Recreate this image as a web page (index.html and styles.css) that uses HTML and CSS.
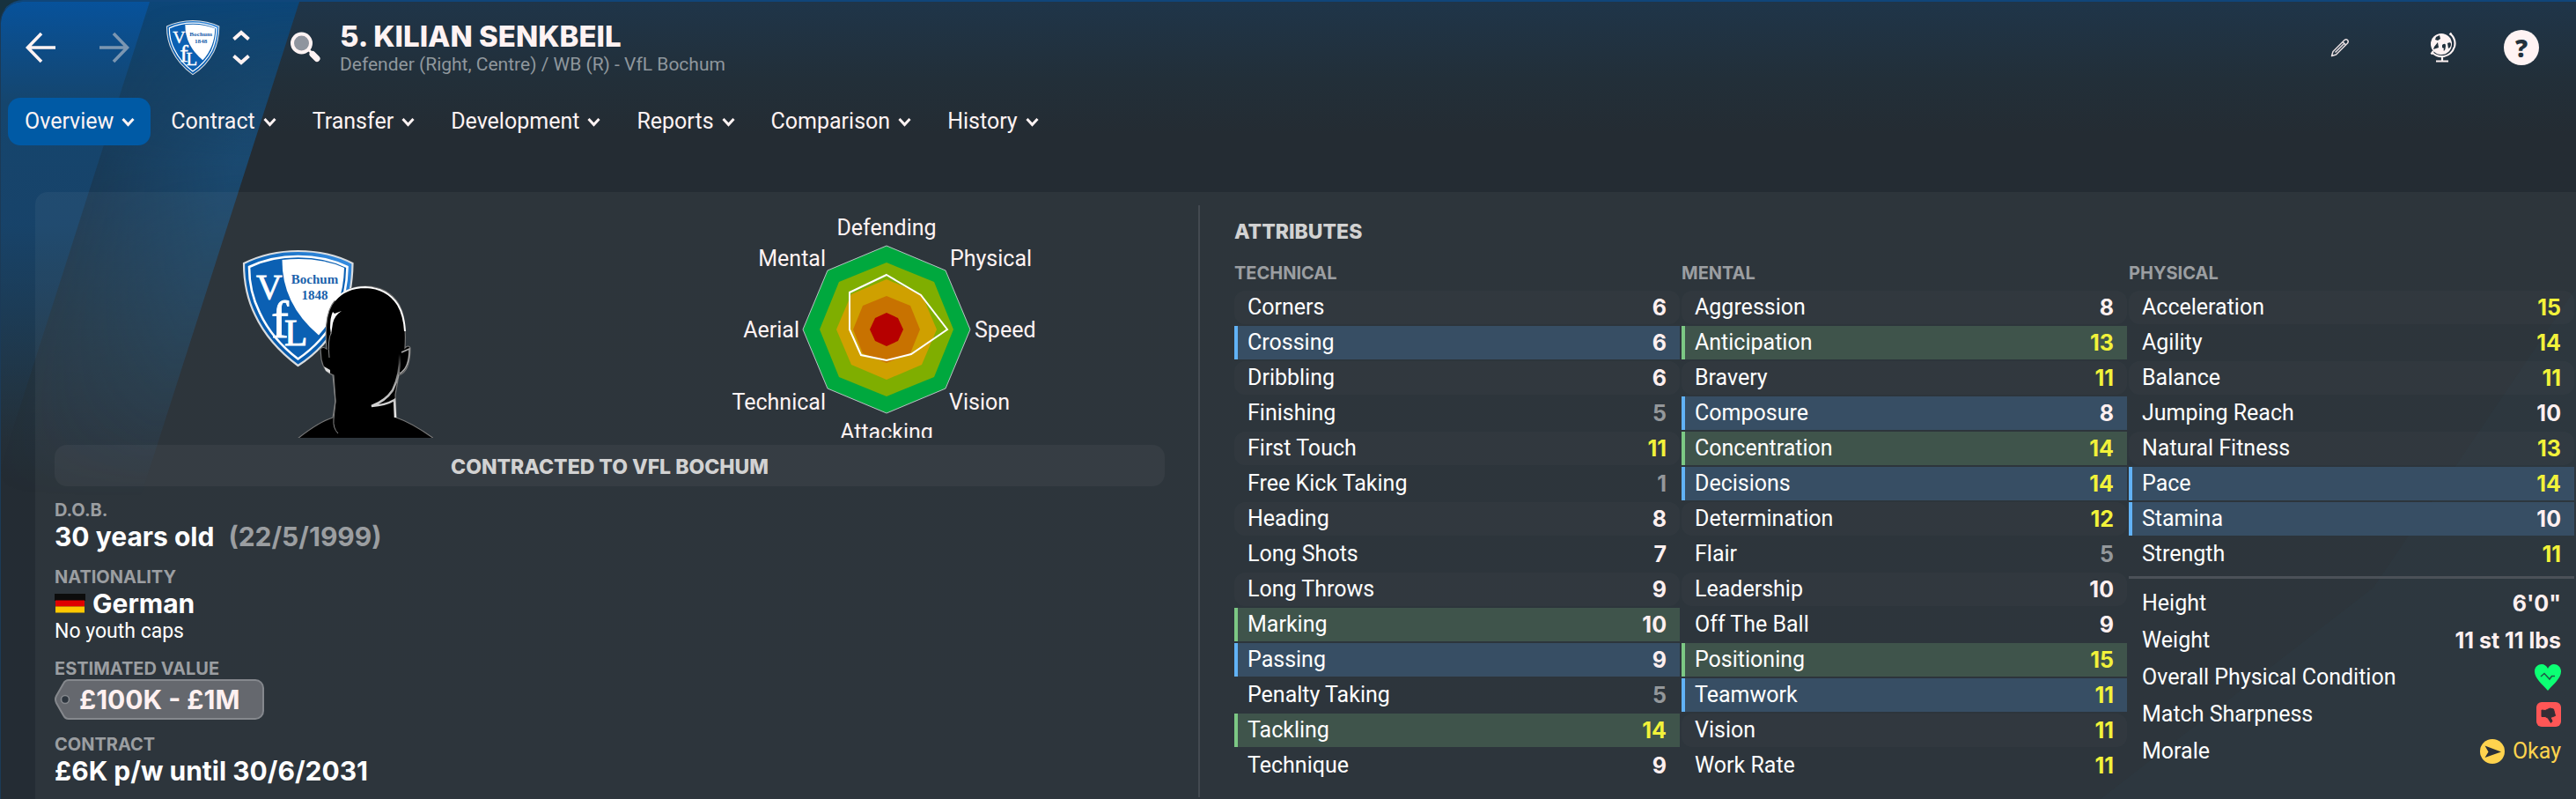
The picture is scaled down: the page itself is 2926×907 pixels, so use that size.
FILE: index.html
```
<!DOCTYPE html>
<html lang="en">
<head>
<meta charset="utf-8">
<title>Kilian Senkbeil - Overview</title>
<link rel="stylesheet" href="styles.css">
</head>
<body>
<svg class="stripes" viewBox="0 0 400 907" aria-hidden="true">
  <defs>
    <linearGradient id="fadeA" x1="0" y1="0" x2="0" y2="1"><stop offset="0" stop-color="#07529b"/><stop offset="0.22" stop-color="#15456d"/><stop offset="0.48" stop-color="#17446c" stop-opacity=".9"/><stop offset="0.95" stop-color="#1b3c56" stop-opacity="0"/></linearGradient>
    <linearGradient id="fadeB" x1="0" y1="0" x2="0" y2="1"><stop offset="0" stop-color="#0c4678"/><stop offset="0.1" stop-color="#153f62"/><stop offset="0.26" stop-color="#1a3852"/><stop offset="0.6" stop-color="#24404f" stop-opacity="0"/></linearGradient>
    <linearGradient id="edge" gradientUnits="userSpaceOnUse" x1="160" y1="0" x2="310" y2="48"><stop offset="0" stop-color="#1d5f94" stop-opacity="0"/><stop offset="1" stop-color="#1d5f94" stop-opacity=".4"/></linearGradient>
    <linearGradient id="edgeFade" x1="0" y1="0" x2="0" y2="1"><stop offset="0" stop-color="#fff" stop-opacity="0"/><stop offset="0.2" stop-color="#fff"/><stop offset="0.62" stop-color="#fff" stop-opacity="0"/></linearGradient>
    <mask id="edgeMask"><path fill="url(#edgeFade)" d="M0 0H400V907H0Z"/></mask>
  </defs>
  <path fill="url(#fadeB)" d="M0 0H339L48 907H0Z"/>
  <path fill="url(#edge)" mask="url(#edgeMask)" d="M169 0H339L48 907H0V528Z"/>
  <path fill="url(#fadeA)" d="M0 0H169L0 528Z"/>
</svg>
<svg class="corner" viewBox="0 0 560 600" aria-hidden="true"><path fill="#2c5058" opacity=".1" d="M560 20V600H20L330 360Z"/></svg>

<header class="topbar">
  <button class="icon-btn" aria-label="Back"><svg width="36" height="36" viewBox="0 0 36 36" fill="none" stroke="#fff3f3" stroke-width="3.6"><path d="M19 2L3.500 18L19 34M3.500 18H35"/></svg></button>
  <button class="icon-btn forward" aria-label="Forward"><svg width="36" height="36" viewBox="0 0 36 36" fill="none" stroke="#7b96b1" stroke-width="3.600"><path d="M17 2L32.500 18L17 34M32.500 18H1"/></svg></button>
  <svg class="club" width="62" height="64" viewBox="274 282 129 136" preserveAspectRatio="none" role="img" aria-label="VfL Bochum"><use href="#crest"/></svg>
  <div class="stepper">
    <button class="icon-btn" aria-label="Previous player"><svg width="20" height="12" viewBox="0 0 20 12" fill="none" stroke="#fff3f3" stroke-width="4"><path d="M1.500 10.500L10 3L18.500 10.500"/></svg></button>
    <button class="icon-btn" aria-label="Next player"><svg width="20" height="12" viewBox="0 0 20 12" fill="none" stroke="#fff3f3" stroke-width="4"><path d="M1.500 1.500L10 9L18.500 1.500"/></svg></button>
  </div>
  <button class="icon-btn search" aria-label="Search"><svg width="36" height="36" viewBox="0 0 36 36"><circle cx="13.500" cy="13" r="10.500" fill="#8f949e" stroke="#fff3f3" stroke-width="4"/><path d="M21 20L25 24" stroke="#fff3f3" stroke-width="3"/><path d="M26 25.500L31 30.500" stroke="#fff3f3" stroke-width="7" stroke-linecap="round"/></svg></button>
  <div class="heading">
    <h1>5. KILIAN SENKBEIL</h1>
    <p>Defender (Right, Centre) / WB (R) - VfL Bochum</p>
  </div>
  <div class="tools">
    <button class="icon-btn" aria-label="Edit"><svg width="22" height="22" viewBox="0 0 22 22" fill="none" stroke="#e8dfe1" stroke-width="1.500" stroke-linejoin="round"><path d="M1.500 20.500L3 15.500L16 2.500Q18 1 19.500 2.500Q21 4 19.500 6L6.500 19Z"/><path d="M5.500 16.500L15.500 6.500M14 4.500L17.500 8"/></svg></button>
    <button class="icon-btn globe" aria-label="World"><svg width="32" height="36" viewBox="0 0 32 36"><circle cx="14" cy="14" r="12" fill="#fff3f3"/><path fill="#22313c" d="M8 6L12 4L13 8L10 10L7 9ZM6 17L10 12L11 18L8 19L5 20ZM15 15Q19 12 19 16Q19 20 17 22Q16 21 17 19L15 18ZM21 13Q25 11 25 14Q25 18 22 19Z"/><path fill="none" stroke="#fff3f3" stroke-width="2.200" d="M23.500 3.500L25.500 1.500M25 3Q31 9 29 17Q26 26 17 28Q9 29 3.500 23.500M5 22L2.500 25.500M15 28V33M8 33.500H22"/></svg></button>
    <button class="icon-btn help" aria-label="Help">?</button>
  </div>
</header>

<nav class="tabs">
  <button class="tab active">Overview <svg class="chev" viewBox="0 0 15 11"><path d="M1.500 2L7.500 8.500L13.500 2"/></svg></button>
  <button class="tab">Contract <svg class="chev" viewBox="0 0 15 11"><path d="M1.500 2L7.500 8.500L13.500 2"/></svg></button>
  <button class="tab">Transfer <svg class="chev" viewBox="0 0 15 11"><path d="M1.500 2L7.500 8.500L13.500 2"/></svg></button>
  <button class="tab">Development <svg class="chev" viewBox="0 0 15 11"><path d="M1.500 2L7.500 8.500L13.500 2"/></svg></button>
  <button class="tab">Reports <svg class="chev" viewBox="0 0 15 11"><path d="M1.500 2L7.500 8.500L13.500 2"/></svg></button>
  <button class="tab">Comparison <svg class="chev" viewBox="0 0 15 11"><path d="M1.500 2L7.500 8.500L13.500 2"/></svg></button>
  <button class="tab">History <svg class="chev" viewBox="0 0 15 11"><path d="M1.500 2L7.500 8.500L13.500 2"/></svg></button>
</nav>

<main class="panel">
  <section class="profile">
    <div class="visuals">
      <svg class="portrait" width="230" height="218" viewBox="262 279 230 218" role="img" aria-label="Player portrait">
        <defs>
          <linearGradient id="blue" x1="1" y1="0" x2="0.3" y2="1"><stop offset="0" stop-color="#3d94e8"/><stop offset="0.5" stop-color="#0a62b5"/><stop offset="1" stop-color="#0759aa"/></linearGradient>
          <linearGradient id="rimR" x1="0" y1="0" x2="0" y2="1"><stop offset="0" stop-color="#fff" stop-opacity="0"/><stop offset="0.5" stop-color="#aaa"/><stop offset="1" stop-color="#eee"/></linearGradient>
          <g id="crest">
            <path fill="url(#blue)" stroke="#d9dcdf" stroke-width="2.200" d="M277 299Q305 285 338.500 285Q374 285 400.500 299Q400 335 388 360Q370 395 338.500 415Q305 390 290 358Q277 332 277 299Z"/>
            <path fill="#0b60b3" stroke="#fff" stroke-width="2.600" d="M283 303Q308 291 338.500 291Q370 291 394.500 303Q394 333 383 358Q367 388 338.500 407.500Q309 385 295 355Q283 331 283 303Z"/>
            <path fill="#fff" d="M320.500 295Q362 291 391 304Q390 350 362 380.500Q320 345 320.500 295Z"/>
            <g font-family="Liberation Serif, serif" font-weight="700">
              <text x="291" y="339" font-size="41" fill="#fff" font-weight="400" stroke="#fff" stroke-width=".8">V</text>
              <text x="308" y="383" font-size="60" fill="#fff" font-weight="400" stroke="#fff" stroke-width=".8">f</text>
              <text x="323" y="391.500" font-size="43" fill="#fff" font-weight="400" stroke="#fff" stroke-width="1">L</text>
              <text x="357.500" y="322" font-size="15" fill="#1b62ab" text-anchor="middle">Bochum</text>
              <text x="357.500" y="340" font-size="15" fill="#1b62ab" text-anchor="middle">1848</text>
            </g>
          </g>
        </defs>
        <use href="#crest"/>
        <path fill="#000" stroke="#777" stroke-width="1.200" d="M338 498Q362 479 378 474L381 455L379 426Q368 423 365 408L364 396Q367 393 371 396Q368 361 377 346Q390 325 415 325Q442 325 454 347Q462 362 460 395Q464 391 466 395Q466 422 453 426L449 448L450 474Q468 480 493 498Z"/>
        <path fill="none" stroke="#fff" stroke-width="2" d="M380 341Q393 326 415 326Q440 327 452 346Q459 358 460 376"/>
        <path fill="#fff" d="M375 372Q375 360 378 354L380 356L388 353Q380 358 378 367L376 380Z"/>
        <path fill="none" stroke="#888" stroke-width="1" d="M376 378Q372 386 374 406M378 426L381 456L379 476Q378 486 384 492"/>
        <path fill="none" stroke="url(#rimR)" stroke-width="2.500" d="M454 402Q455 425 446 443Q438 455 422 461Q438 460 448 454L449 474"/>
        <path fill="#ddd" d="M368 416L375 420L375 424L370 421Z"/>
        <path fill="none" stroke="#aaa" stroke-width="1.500" d="M456 400L465 396Q465 418 454 424"/>
      </svg>
      <svg class="radar" width="370" height="279" viewBox="822 218 370 279" role="img" aria-label="Ability polygon">
        <path fill="#00a83e" stroke="#b9c2c5" stroke-width="1" d="M1006 279L1073 307L1101 374L1073 441L1006 469L939 441L911 374L939 307Z"/>
        <path fill="#7fae00" d="M1006 298L1060 320L1082 374L1060 428L1006 450L952 428L930 374L952 320Z"/>
        <path fill="#cfa000" d="M1006 317L1046 334L1063 374L1046 414L1006 431L966 414L949 374L966 334Z"/>
        <path fill="#c87200" d="M1006 336L1033 347L1044 374L1033 401L1006 412L979 401L968 374L979 347Z"/>
        <path fill="#b60000" d="M1006 355L1019 361L1025 374L1019 387L1006 393L993 387L987 374L993 361Z"/>
        <path fill="none" stroke="#fff" stroke-width="2" d="M1006 312L1045 335L1075 374L1034 402L1006 409L977 403L964 374L964 332Z"/>
        <g class="radar-label">
          <text x="1006" y="267" text-anchor="middle">Defending</text>
          <text x="1078" y="302">Physical</text>
          <text x="1106" y="383">Speed</text>
          <text x="1077" y="465">Vision</text>
          <text x="1006" y="499" text-anchor="middle">Attacking</text>
          <text x="937" y="465" text-anchor="end">Technical</text>
          <text x="907" y="383" text-anchor="end">Aerial</text>
          <text x="937" y="302" text-anchor="end">Mental</text>
        </g>
      </svg>
    </div>
    <h2 class="contracted">CONTRACTED TO VFL BOCHUM</h2>
    <dl class="facts">
      <div><dt>D.O.B.</dt><dd>30 years old <span class="dim">(22/5/1999)</span></dd></div>
      <div><dt>NATIONALITY</dt><dd><svg class="flag" width="35" height="22" viewBox="0 0 35 22" role="img" aria-label="Germany"><path fill="#0c0c0c" d="M0 0H35V8H0Z"/><path fill="#e00000" d="M1 7.500H34V14.500H1Z"/><path fill="#ffc800" d="M1 14.500H34V21.500H1Z"/></svg>German</dd><dd class="small">No youth caps</dd></div>
      <div><dt>ESTIMATED VALUE</dt><dd><span class="tag"><svg class="tag-tip" viewBox="0 0 20 46" aria-hidden="true"><path fill="#65686e" d="M20 1H16Q12 1 10 5L2 19Q0 23 2 27L10 41Q12 45 16 45H20Z"/><path fill="none" stroke="#85888d" stroke-width="2" d="M20 1H16Q12 1 10 5L2 19Q0 23 2 27L10 41Q12 45 16 45H20"/><circle cx="12" cy="23" r="4.500" fill="#2d353e" stroke="#85888d" stroke-width="1.600"/></svg><span class="tag-body">£100K - £1M</span></span></dd></div>
      <div><dt>CONTRACT</dt><dd>£6K p/w until 30/6/2031</dd></div>
    </dl>
  </section>

  <section class="attributes">
    <h2>ATTRIBUTES</h2>
    <div class="columns">
      <div class="column">
        <h3>TECHNICAL</h3>
        <dl class="rows">
          <div><dt>Corners</dt><dd>6</dd></div>
          <div class="pref"><dt>Crossing</dt><dd>6</dd></div>
          <div><dt>Dribbling</dt><dd>6</dd></div>
          <div><dt>Finishing</dt><dd class="low">5</dd></div>
          <div><dt>First Touch</dt><dd class="good">11</dd></div>
          <div><dt>Free Kick Taking</dt><dd class="low">1</dd></div>
          <div><dt>Heading</dt><dd>8</dd></div>
          <div><dt>Long Shots</dt><dd>7</dd></div>
          <div><dt>Long Throws</dt><dd>9</dd></div>
          <div class="key"><dt>Marking</dt><dd>10</dd></div>
          <div class="pref"><dt>Passing</dt><dd>9</dd></div>
          <div><dt>Penalty Taking</dt><dd class="low">5</dd></div>
          <div class="key"><dt>Tackling</dt><dd class="good">14</dd></div>
          <div><dt>Technique</dt><dd>9</dd></div>
        </dl>
      </div>
      <div class="column">
        <h3>MENTAL</h3>
        <dl class="rows">
          <div><dt>Aggression</dt><dd>8</dd></div>
          <div class="key"><dt>Anticipation</dt><dd class="good">13</dd></div>
          <div><dt>Bravery</dt><dd class="good">11</dd></div>
          <div class="pref"><dt>Composure</dt><dd>8</dd></div>
          <div class="key"><dt>Concentration</dt><dd class="good">14</dd></div>
          <div class="pref"><dt>Decisions</dt><dd class="good">14</dd></div>
          <div><dt>Determination</dt><dd class="good">12</dd></div>
          <div><dt>Flair</dt><dd class="low">5</dd></div>
          <div><dt>Leadership</dt><dd>10</dd></div>
          <div><dt>Off The Ball</dt><dd>9</dd></div>
          <div class="key"><dt>Positioning</dt><dd class="good">15</dd></div>
          <div class="pref"><dt>Teamwork</dt><dd class="good">11</dd></div>
          <div><dt>Vision</dt><dd class="good">11</dd></div>
          <div><dt>Work Rate</dt><dd class="good">11</dd></div>
        </dl>
      </div>
      <div class="column">
        <h3>PHYSICAL</h3>
        <dl class="rows">
          <div><dt>Acceleration</dt><dd class="good">15</dd></div>
          <div><dt>Agility</dt><dd class="good">14</dd></div>
          <div><dt>Balance</dt><dd class="good">11</dd></div>
          <div><dt>Jumping Reach</dt><dd>10</dd></div>
          <div><dt>Natural Fitness</dt><dd class="good">13</dd></div>
          <div class="pref"><dt>Pace</dt><dd class="good">14</dd></div>
          <div class="pref"><dt>Stamina</dt><dd>10</dd></div>
          <div><dt>Strength</dt><dd class="good">11</dd></div>
        </dl>
        <dl class="status">
          <div><dt>Height</dt><dd>6'0"</dd></div>
          <div><dt>Weight</dt><dd>11 st 11 lbs</dd></div>
          <div><dt>Overall Physical Condition</dt><dd><svg width="30" height="30" viewBox="0 0 30 30" role="img" aria-label="Good"><path fill="#0cff74" d="M15 30C8 22 0 16 0 8C0 3 4 0 8 0C11 0 14 2 15 5C16 2 19 0 22 0C26 0 30 3 30 8C30 16 22 22 15 30Z"/><path fill="none" stroke="#1f5a46" stroke-width="1.600" d="M7 14L11 10.500L17 17L19.500 13.500H23"/></svg></dd></div>
          <div><dt>Match Sharpness</dt><dd><svg width="28" height="28" viewBox="0 0 28 28" role="img" aria-label="Poor"><rect width="28" height="28" rx="6" fill="#ff5656"/><path fill="#352d35" stroke="#352d35" stroke-linejoin="round" d="M6 9L10 9.500L15.500 7L19.500 8L21.500 15.500L16 17.500L18 21.500L16.500 23.500L13 18L10 16.500H6Z"/></svg></dd></div>
          <div><dt>Morale</dt><dd class="morale"><svg width="28" height="28" viewBox="0 0 28 28" aria-hidden="true"><circle cx="14" cy="14" r="14" fill="#ffd34e"/><path fill="#292f38" d="M5.500 7.500L24 14.500L5.500 21L9.500 14.500Z"/></svg>Okay</dd></div>
        </dl>
      </div>
    </div>
  </section>
</main>
</body>
</html>
```
FILE: styles.css
```
* { box-sizing: border-box; margin: 0; padding: 0; }
html { height: 100%; background: #17323f; }
body {
  position: relative;
  isolation: isolate;
  min-height: 100%;
  display: flex;
  flex-direction: column;
  overflow-x: hidden;
  background: linear-gradient(#1f3549, #222f39 88px, #242c33 150px, #242c34);
  border-top: 2px solid #10467a;
  border-left: 1px solid #1b3a57;
  border-top-left-radius: 26px;
  color: #fff;
  font: 25px/30px Roboto, "Liberation Sans", sans-serif;
}
button { background: none; border: 0; color: inherit; font: inherit; cursor: pointer; }
svg { display: block; }
.stripes { position: absolute; left: 0; top: 0; width: 400px; height: 907px; z-index: -1; border-top-left-radius: 24px; }
.corner { position: absolute; right: 0; bottom: 0; width: 560px; height: 600px; z-index: -1; }

.topbar { display: flex; align-items: center; height: 104px; padding: 0 42px 0 27px; }
.icon-btn { display: flex; align-items: center; justify-content: center; flex: none; }
.forward { margin-left: 48px; }
.club { margin-left: 40px; flex: none; }
.stepper { display: flex; flex-direction: column; gap: 16px; margin-left: 14px; }
.search { margin-left: 45px; }
.heading { margin-left: 21px; }
.heading h1 { font: 800 33px/38px Inter, Roboto, sans-serif; color: #fff3f3; }
.heading p { font-size: 21px; line-height: 26px; color: #8f979d; }
.tools { display: flex; align-items: center; margin-left: auto; }
.globe { margin-left: 90px; }
.help {
  width: 40px; height: 40px; margin-left: 53px; border-radius: 50%;
  background: #fff3f3; color: #22313c; font: 800 28px/40px "Open Sans", sans-serif;
}

.tabs { display: flex; gap: 4px; padding: 5px 0 0 8px; }
.tab {
  display: flex; align-items: center; gap: 9px; height: 54px; padding: 0 18px 0 19px;
  border-radius: 14px; color: #fff3f3;
}
.tab.active { background: #005aa5; }
.chev { width: 15px; height: 11px; fill: none; stroke: currentColor; stroke-width: 3; }

.panel {
  flex: 1; display: grid; grid-template-columns: 1321fr 1565fr;
  margin: 53px 0 0 39px; padding-bottom: 2px;
  background: rgba(255, 255, 255, .045); border-top-left-radius: 14px;
}
.profile { padding: 0 38px 0 22px; }
.visuals { display: grid; grid-template-columns: 1fr 1fr; align-items: end; justify-items: center; }
.radar-label { font: 25px Roboto, "Liberation Sans", sans-serif; fill: #fff3f3; }
.contracted {
  height: 47px; margin-top: 8px; border-radius: 14px; text-align: center;
  background: rgba(255, 255, 255, .045); color: #d2d2d2; font: 800 23px/50px Inter, Roboto, sans-serif;
}
.facts { display: grid; gap: 16px; padding-top: 15px; font-family: Inter, Roboto, sans-serif; }
.facts dt { font-weight: 700; font-size: 20px; line-height: 24px; color: #9b9ea1; }
.facts dd { display: flex; align-items: center; font-weight: 700; font-size: 30px; line-height: 36px; }
.facts .dim { color: #9b9ea1; margin-left: 16px; }
.flag { margin-right: 8px; }
.facts .small { font: 23px/28px Roboto, sans-serif; }
.tag { display: flex; height: 46px; }
.tag-tip { width: 20px; height: 46px; }
.tag-body {
  padding: 0 26px 0 8px; line-height: 42px; color: #fff0f0; background: #65686e;
  border: 2px solid #85888d; border-left: 0; border-radius: 0 10px 10px 0;
}

.attributes { position: relative; padding: 31px 2px 0 41px; }
.attributes::before { content: ""; position: absolute; left: 0; top: 15px; bottom: 0; width: 2px; background: #434950; }
.attributes h2 { font: 800 23px/28px Inter, Roboto, sans-serif; color: #d2d2d2; }
.columns { display: grid; grid-template-columns: repeat(3, 1fr); gap: 2px; padding-top: 19px; }
.column h3 { font: 700 20px/28px Inter, Roboto, sans-serif; color: #9b9ea1; padding-bottom: 6px; }
.rows { display: grid; gap: 2px; }
.rows > div {
  display: flex; align-items: center; justify-content: space-between;
  height: 38px; padding: 0 15px; border-radius: 12px;
}
.rows > div:nth-child(odd) { background: rgba(255, 255, 255, .02); }
.rows > .pref, .rows > .key { border-radius: 0; border-left: 4px solid; padding-left: 11px; }
.rows > .pref, .rows > .pref:nth-child(odd) { background: #374e64; border-color: #61b2f6; }
.rows > .key, .rows > .key:nth-child(odd) { background: #3f544b; border-color: #7cc884; }
.rows dd, .status dd { font: 700 25px/30px Inter, Roboto, sans-serif; color: #fff0f0; }
.rows .good { color: #f2f23a; }
.rows .low { color: #94989b; }
.status { margin-top: 6px; padding-top: 7px; border-top: 3px solid #4b5158; }
.status > div { display: flex; align-items: center; justify-content: space-between; height: 42px; padding: 0 15px; }
.status .morale { display: flex; gap: 9px; align-items: center; color: #ffd34e; font: 25px/30px Roboto, sans-serif; }
```
